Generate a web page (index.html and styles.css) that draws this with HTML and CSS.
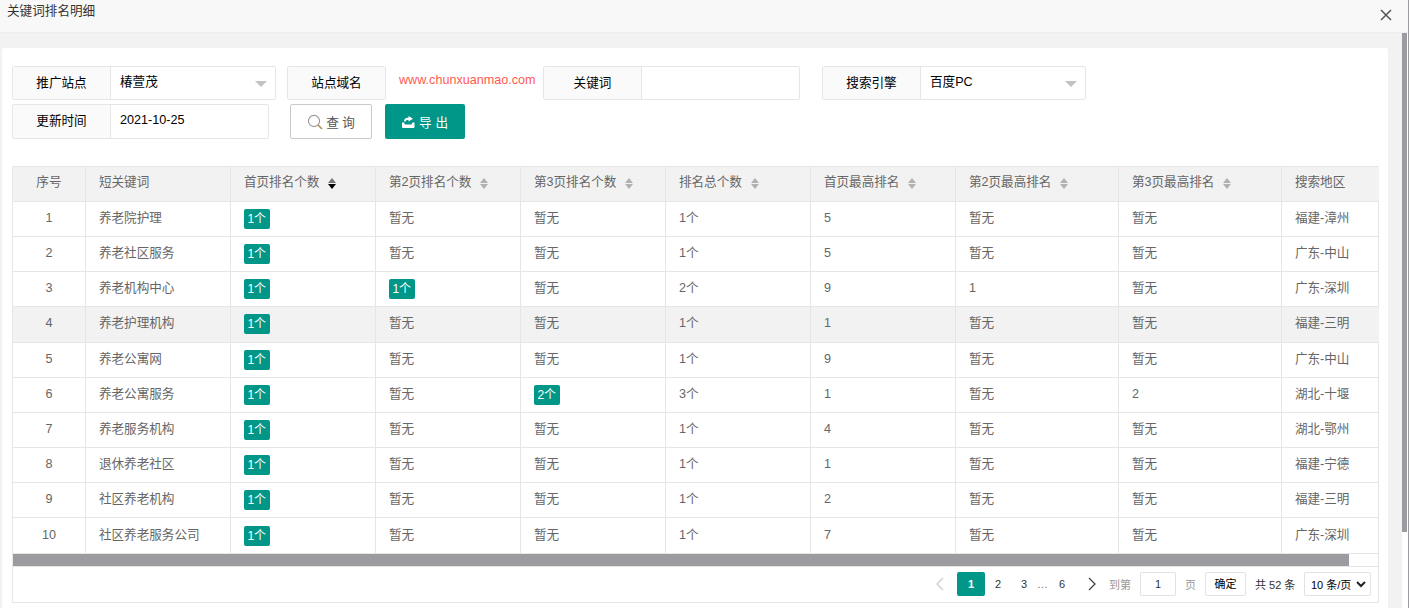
FILE: index.html
```html
<!DOCTYPE html>
<html lang="zh">
<head>
  <meta charset="UTF-8" />
  <title>关键词排名明细</title>
  <link rel="stylesheet" href="styles.css">
</head>
<body>
  <div class="dialog">
    <div class="dialog-title">
      <span>关键词排名明细</span>
      <svg class="close" width="12" height="12" viewBox="0 0 12 12"><path d="M1 1 L11 11 M11 1 L1 11" stroke="#555" stroke-width="1.5" fill="none"/></svg>
    </div>
    <div class="dialog-body">
      <div class="card">
        <div class="filters">
          <div class="filter-row first">
            <div class="field w-site">
              <label>推广站点</label>
              <div class="value">椿萱茂<i class="caret"></i></div>
            </div>
            <div class="field w-domain">
              <label>站点域名</label>
            </div>
            <div class="domain">www.chunxuanmao.com</div>
            <div class="field w-keyword">
              <label>关键词</label>
              <div class="value"></div>
            </div>
            <div class="field w-engine">
              <label>搜索引擎</label>
              <div class="value">百度PC<i class="caret"></i></div>
            </div>
          </div>
          <div class="filter-row">
            <div class="field w-date">
              <label>更新时间</label>
              <div class="value">2021-10-25</div>
            </div>
            <button class="btn btn-plain">
              <svg width="16" height="16" viewBox="0 0 16 16"><circle cx="7" cy="7" r="5.6" fill="none" stroke="#999" stroke-width="1.1"/><path d="M11 11 L15 15" stroke="#b58a5a" stroke-width="1.6"/></svg>
              查 询
            </button>
            <button class="btn btn-green">
              <svg width="14" height="14" viewBox="0 0 14 14"><path d="M7.5 1 L12 3.8 L7.5 6.6 V5 H6 Q4.8 5 4.5 6.6 H3 Q3.2 3 6.5 2.8 H7.5 Z M1 7.5 H3 L4 9.5 H10.5 L11.5 7.5 H13.5 V12 Q13.5 13 12.5 13 H2 Q1 13 1 12 Z" fill="#fff"/></svg>
              导出
            </button>
          </div>
        </div>
        <div class="table-box">
          <table>
            <colgroup id="cols"></colgroup>
            <thead><tr id="head"></tr></thead>
            <tbody id="rows"></tbody>
          </table>
          <div class="hscroll"><div class="hscroll-thumb"></div></div>
          <div class="pager">
            <svg class="arrow" width="10" height="14" viewBox="0 0 10 14"><path d="M8 1 L2 7 L8 13" stroke="#ccc" stroke-width="1.3" fill="none"/></svg>
            <a class="page active">1</a>
            <a class="page">2</a>
            <a class="page">3</a>
            <span class="dots">…</span>
            <a class="page">6</a>
            <svg class="arrow next" width="10" height="14" viewBox="0 0 10 14"><path d="M2 1 L8 7 L2 13" stroke="#444" stroke-width="1.3" fill="none"/></svg>
            <span class="muted goto">到第</span>
            <div class="page-input">1</div>
            <span class="muted unit">页</span>
            <div class="confirm">确定</div>
            <span class="total">共 52 条</span>
            <div class="size">10 条/页
              <svg width="10" height="7" viewBox="0 0 10 7"><path d="M1 1 L5 5 L9 1" stroke="#222" stroke-width="2" fill="none"/></svg>
            </div>
          </div>
        </div>
      </div>
    </div>
    <div class="vscroll"><div class="vscroll-thumb"></div></div>
  </div>
  <script src="table.js"></script>
</body>
</html>
```

FILE: table.js
```js
// 表格数据
var widths = [72, 145, 145, 145, 145, 145, 145, 163, 163, 98];
var heads = ["序号", "短关键词", "首页排名个数", "第2页排名个数", "第3页排名个数", "排名总个数", "首页最高排名", "第2页最高排名", "第3页最高排名", "搜索地区"];
var data = [
  ["养老院护理", "1个", "暂无", "暂无", "1个", "5", "暂无", "暂无", "福建-漳州"],
  ["养老社区服务", "1个", "暂无", "暂无", "1个", "5", "暂无", "暂无", "广东-中山"],
  ["养老机构中心", "1个", "1个", "暂无", "2个", "9", "1", "暂无", "广东-深圳"],
  ["养老护理机构", "1个", "暂无", "暂无", "1个", "1", "暂无", "暂无", "福建-三明"],
  ["养老公寓网", "1个", "暂无", "暂无", "1个", "9", "暂无", "暂无", "广东-中山"],
  ["养老公寓服务", "1个", "暂无", "2个", "3个", "1", "暂无", "2", "湖北-十堰"],
  ["养老服务机构", "1个", "暂无", "暂无", "1个", "4", "暂无", "暂无", "湖北-鄂州"],
  ["退休养老社区", "1个", "暂无", "暂无", "1个", "1", "暂无", "暂无", "福建-宁德"],
  ["社区养老机构", "1个", "暂无", "暂无", "1个", "2", "暂无", "暂无", "福建-三明"],
  ["社区养老服务公司", "1个", "暂无", "暂无", "1个", "7", "暂无", "暂无", "广东-深圳"]
];

var colsHtml = "";
widths.forEach(function (w) {
  colsHtml += '<col style="width:' + w + 'px">';
});
document.getElementById("cols").innerHTML = colsHtml;

var headHtml = "";
heads.forEach(function (h, i) {
  var sort = "";
  if (i >= 2 && i <= 8) {
    sort = '<span class="sort' + (i === 2 ? " desc" : "") + '"><i></i><i></i></span>';
  }
  headHtml += '<th' + (i === 0 ? ' class="center"' : "") + '>' + h + sort + '</th>';
});
document.getElementById("head").innerHTML = headHtml;

var rowsHtml = "";
data.forEach(function (row, r) {
  rowsHtml += '<tr' + (r === 3 ? ' class="hover"' : "") + '><td class="center">' + (r + 1) + '</td>';
  row.forEach(function (cell, c) {
    // 前三页的个数用绿色标签
    if (c >= 1 && c <= 3 && cell !== "暂无") {
      cell = '<span class="tag">' + cell + '</span>';
    }
    rowsHtml += '<td>' + cell + '</td>';
  });
  rowsHtml += '</tr>';
});
document.getElementById("rows").innerHTML = rowsHtml;
```

FILE: styles.css
```css
* {
  box-sizing: border-box;
}

html, body {
  margin: 0;
  height: 100%;
  overflow: hidden;
}

body {
  font-family: "Liberation Sans", "Noto Sans CJK SC", sans-serif;
  font-size: 12.6px;
  color: #666;
  background: #fff;
}

.dialog {
  position: relative;
  height: 608px;
  overflow: hidden;
  background: #f2f2f2;
  border-right: 1px solid #9c9ca0;
}

.dialog-title {
  display: flex;
  justify-content: space-between;
  height: 33px;
  padding: 3px 16px 0 7px;
  line-height: 16px;
  color: #333;
  background: #f8f8f8;
  border-bottom: 1px solid #eee;
}

.close {
  margin-top: 6px;
}

.dialog-body {
  padding: 15px 20px 0 2px;
}

.card {
  height: 600px;
  padding: 18px 10px 0;
  background: #fff;
  border-radius: 3px;
}

.filter-row {
  display: flex;
  height: 35px;
}

.filter-row.first {
  height: 34px;
  margin-bottom: 4px;
}

.field {
  display: flex;
  background: #fff;
  border: 1px solid #e6e6e6;
  border-radius: 2px;
  color: #000;
}

.field label {
  flex: none;
  width: 98px;
  line-height: 32px;
  text-align: center;
  background: #fafafa;
  border-right: 1px solid #e6e6e6;
}

.field .value {
  position: relative;
  flex: 1;
  padding-left: 9px;
  line-height: 30px;
}

.w-site { width: 264px; }
.w-domain { width: 99px; margin-left: 11px; }
.w-domain label { width: 100%; border-right: 0; }
.w-keyword { width: 257px; }
.w-engine { width: 264px; margin-left: 22px; }
.w-date { width: 257px; }

.domain {
  width: 157px;
  padding-left: 13px;
  line-height: 28px;
  color: #ff5a4f;
  white-space: nowrap;
}

.caret {
  position: absolute;
  top: 14px;
  right: 8px;
  border: 6px solid transparent;
  border-top-color: #c2c2c2;
  border-bottom: 0;
}

.btn {
  display: flex;
  align-items: center;
  justify-content: center;
  gap: 3px;
  width: 82px;
  height: 35px;
  padding: 0;
  font: inherit;
  border-radius: 2px;
}

.btn-plain {
  margin-left: 21px;
  color: #555;
  background: #fff;
  border: 1px solid #c9c9c9;
}

.btn-green {
  width: 80px;
  margin-left: 13px;
  padding-left: 3px;
  gap: 4px;
  color: #fff;
  letter-spacing: 4px;
  background: #009688;
  border: 0;
}

.table-box {
  margin-top: 27px;
  width: 1367px;
  height: 437px;
  border: 1px solid #e6e6e6;
  border-top: 0;
}

table {
  width: 1366px;
  table-layout: fixed;
  border-collapse: collapse;
}

th, td {
  height: 35.2px;
  padding: 0 13px 2px 13.4px;
  line-height: 16px;
  text-align: left;
  font-weight: normal;
  white-space: nowrap;
  overflow: hidden;
  border: 1px solid #e6e6e6;
}

th {
  height: 34.8px;
  padding-bottom: 3px;
  background: #f2f2f2;
}

th:first-child, td:first-child {
  border-left: 0;
}

th:last-child, td:last-child {
  border-right: 0;
}

.center {
  text-align: center;
}

tr.hover td {
  background: #f2f2f2;
}

.sort {
  display: inline-block;
  margin-left: 9px;
  vertical-align: middle;
}

.sort i {
  display: block;
  width: 0;
  border: 4.5px solid transparent;
  border-top: 0;
  border-bottom: 5px solid #b2b2b2;
}

.sort i + i {
  margin-top: 1px;
  border-bottom: 0;
  border-top: 5px solid #b2b2b2;
}

.sort.desc i {
  border-bottom-color: #777;
}

.sort.desc i + i {
  border-top-color: #000;
}

.tag {
  display: inline-block;
  height: 20px;
  margin-top: 2px;
  padding: 0 3.5px;
  line-height: 20px;
  font-size: 12px;
  color: #fff;
  background: #009688;
  border-radius: 2px;
  vertical-align: middle;
}

.hscroll {
  height: 12px;
}

.hscroll-thumb {
  width: 1336px;
  height: 12px;
  background: #9c9ca0;
}

.pager {
  display: flex;
  align-items: center;
  height: 36px;
  padding: 0 7px 0 0;
  justify-content: flex-end;
  border-top: 1px solid #e6e6e6;
  font-size: 11px;
  color: #333;
}

.page {
  width: 26px;
  line-height: 24px;
  text-align: center;
}

.page.active {
  width: 28px;
  color: #fff;
  font-weight: bold;
  background: #009688;
  border-radius: 2px;
}

.dots {
  width: 12px;
  color: #777;
}

.arrow {
  margin-right: 12px;
}

.arrow.next {
  margin: 0 12px;
}

.muted {
  color: #999;
}

.page-input {
  width: 36px;
  height: 24px;
  margin-left: 9px;
  line-height: 22px;
  text-align: center;
  border: 1px solid #e2e2e2;
  border-radius: 2px;
}

.unit {
  margin-left: 9px;
}

.confirm {
  width: 41px;
  height: 24px;
  margin-left: 9px;
  line-height: 22px;
  text-align: center;
  color: #000;
  border: 1px solid #e2e2e2;
  border-radius: 2px;
}

.total {
  width: 40px;
  margin-left: 9px;
  white-space: nowrap;
}

.size {
  display: flex;
  align-items: center;
  justify-content: space-between;
  width: 67px;
  height: 24px;
  margin-left: 9px;
  padding: 0 4px 0 6px;
  color: #000;
  white-space: nowrap;
  border: 1px solid #e2e2e2;
  border-radius: 2px;
}

.vscroll {
  position: absolute;
  top: 33px;
  right: 0;
  bottom: 0;
  width: 6px;
  background: #fff;
}

.vscroll-thumb {
  width: 5px;
  height: 499px;
  background: #9c9ca0;
}
```
